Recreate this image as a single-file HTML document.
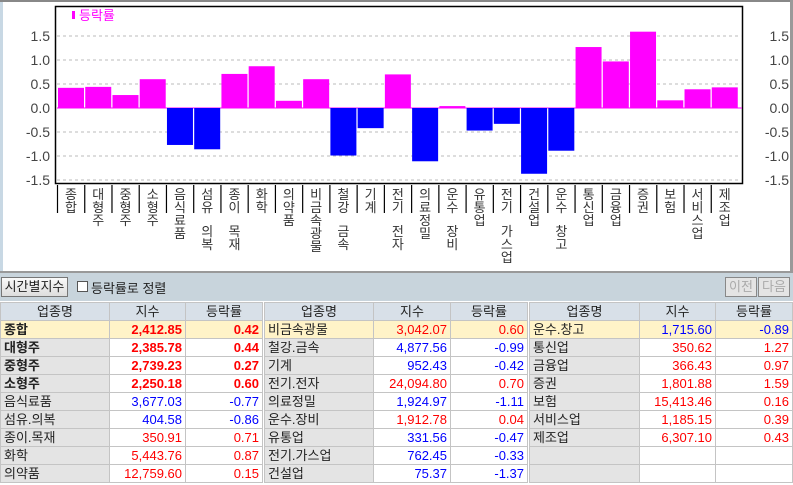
<!DOCTYPE html>
<html><head><meta charset="utf-8"><style>
*{margin:0;padding:0;box-sizing:border-box}
body{width:793px;height:485px;overflow:hidden;background:#fff;font-family:"Liberation Sans","Noto Sans CJK KR","NanumGothic",sans-serif;position:relative}
#bar{position:absolute;left:0;top:273px;width:793px;height:28px;background:#c8d4dc}
.btn{position:absolute;top:4px;height:20px;border:1px solid #777;background:linear-gradient(#fafafa,#ddd);font-size:13px;line-height:18px;text-align:center;color:#222}
.gbtn{color:#aaa;border-color:#888;background:#e4e4e4}
table{position:absolute;top:302px;border-collapse:collapse;font-size:13px;table-layout:fixed}
td,th{height:18px;border:1px solid #c4c4c4;padding:0 3px;white-space:nowrap;overflow:hidden;line-height:17px}
th{background:#d8e0e8;font-weight:normal;color:#222}
td.n{background:#e4e4e4;color:#222;text-align:left}
td{text-align:right;background:#fff}
tr.h td{background:#fff3c8}
.r{color:#f00}.b{color:#00f}.bd{font-weight:bold}
</style></head><body>
<svg style="position:absolute;left:0;top:0" width="793" height="273" font-family="Liberation Sans, Noto Sans CJK KR, sans-serif">
<rect x="0" y="0" width="793" height="273" fill="#fff"/>
<rect x="0" y="0" width="3" height="273" fill="#c8d8e4"/>
<rect x="0" y="0" width="793" height="2" fill="#888"/>
<rect x="790" y="0" width="3" height="273" fill="#999"/>
<rect x="0" y="271" width="793" height="2" fill="#999"/>
<rect x="55.5" y="6.5" width="687" height="177" fill="#fff" stroke="#000" stroke-width="1.5"/>
<g stroke="#bbb" stroke-dasharray="3,3">
<line x1="57" x2="742" y1="36" y2="36"/><line x1="57" x2="742" y1="60" y2="60"/><line x1="57" x2="742" y1="84" y2="84"/><line x1="57" x2="742" y1="132" y2="132"/><line x1="57" x2="742" y1="156" y2="156"/><line x1="57" x2="742" y1="180" y2="180"/>
</g>
<line x1="57" x2="742" y1="108" y2="108" stroke="#f0f" stroke-width="1"/>
<g font-size="14" fill="#444" text-anchor="end">
<text x="50" y="41">1.5</text><text x="50" y="65">1.0</text><text x="50" y="89">0.5</text><text x="50" y="113">0.0</text><text x="50" y="137">-0.5</text><text x="50" y="161">-1.0</text><text x="50" y="185">-1.5</text>
<text x="789" y="41">1.5</text><text x="789" y="65">1.0</text><text x="789" y="89">0.5</text><text x="789" y="113">0.0</text><text x="789" y="137">-0.5</text><text x="789" y="161">-1.0</text><text x="789" y="185">-1.5</text>
</g>
<rect x="72" y="11" width="3" height="8" fill="#f0f"/>
<text x="79" y="20" font-size="13" fill="#f0f">등락률</text>
<g id="bars"></g>
<g id="ticks" stroke="#000" stroke-width="1.2"></g>
<g id="labels" font-size="13" fill="#333" text-anchor="middle"></g>
</svg>
<div id="bar">
<div class="btn" style="left:1px;width:67px">시간별지수</div>
<div style="position:absolute;left:77px;top:8px;width:11px;height:11px;background:#fff;border:1px solid #555"></div>
<div style="position:absolute;left:91px;top:5px;font-size:13px;color:#222">등락률로 정렬</div>
<div class="btn gbtn" style="left:725px;width:32px">이전</div>
<div class="btn gbtn" style="left:758px;width:32px">다음</div>
</div>
<table style="left:0;width:262px"><colgroup><col style="width:109px"><col style="width:76px"><col style="width:77px"></colgroup>
<tr><th>업종명</th><th>지수</th><th>등락률</th></tr>
<tr class="h"><td class="n bd">종합</td><td class="r bd">2,412.85</td><td class="r bd">0.42</td></tr>
<tr><td class="n bd">대형주</td><td class="r bd">2,385.78</td><td class="r bd">0.44</td></tr>
<tr><td class="n bd">중형주</td><td class="r bd">2,739.23</td><td class="r bd">0.27</td></tr>
<tr><td class="n bd">소형주</td><td class="r bd">2,250.18</td><td class="r bd">0.60</td></tr>
<tr><td class="n">음식료품</td><td class="b">3,677.03</td><td class="b">-0.77</td></tr>
<tr><td class="n">섬유.의복</td><td class="b">404.58</td><td class="b">-0.86</td></tr>
<tr><td class="n">종이.목재</td><td class="r">350.91</td><td class="r">0.71</td></tr>
<tr><td class="n">화학</td><td class="r">5,443.76</td><td class="r">0.87</td></tr>
<tr><td class="n">의약품</td><td class="r">12,759.60</td><td class="r">0.15</td></tr>
</table>
<table style="left:264px;width:263px"><colgroup><col style="width:109px"><col style="width:77px"><col style="width:77px"></colgroup>
<tr><th>업종명</th><th>지수</th><th>등락률</th></tr>
<tr class="h"><td class="n">비금속광물</td><td class="r">3,042.07</td><td class="r">0.60</td></tr>
<tr><td class="n">철강.금속</td><td class="b">4,877.56</td><td class="b">-0.99</td></tr>
<tr><td class="n">기계</td><td class="b">952.43</td><td class="b">-0.42</td></tr>
<tr><td class="n">전기.전자</td><td class="r">24,094.80</td><td class="r">0.70</td></tr>
<tr><td class="n">의료정밀</td><td class="b">1,924.97</td><td class="b">-1.11</td></tr>
<tr><td class="n">운수.장비</td><td class="r">1,912.78</td><td class="r">0.04</td></tr>
<tr><td class="n">유통업</td><td class="b">331.56</td><td class="b">-0.47</td></tr>
<tr><td class="n">전기.가스업</td><td class="b">762.45</td><td class="b">-0.33</td></tr>
<tr><td class="n">건설업</td><td class="b">75.37</td><td class="b">-1.37</td></tr>
</table>
<table style="left:529px;width:263px"><colgroup><col style="width:110px"><col style="width:76px"><col style="width:77px"></colgroup>
<tr><th>업종명</th><th>지수</th><th>등락률</th></tr>
<tr class="h"><td class="n">운수.창고</td><td class="b">1,715.60</td><td class="b">-0.89</td></tr>
<tr><td class="n">통신업</td><td class="r">350.62</td><td class="r">1.27</td></tr>
<tr><td class="n">금융업</td><td class="r">366.43</td><td class="r">0.97</td></tr>
<tr><td class="n">증권</td><td class="r">1,801.88</td><td class="r">1.59</td></tr>
<tr><td class="n">보험</td><td class="r">15,413.46</td><td class="r">0.16</td></tr>
<tr><td class="n">서비스업</td><td class="r">1,185.15</td><td class="r">0.39</td></tr>
<tr><td class="n">제조업</td><td class="r">6,307.10</td><td class="r">0.43</td></tr>
<tr><td class="n"></td><td></td><td></td></tr>
<tr><td class="n"></td><td></td><td></td></tr>
</table>
<script>
var d=[["종합",.42],["대형주",.44],["중형주",.27],["소형주",.60],["음식료품",-.77],["섬유 의복",-.86],["종이 목재",.71],["화학",.87],["의약품",.15],["비금속광물",.60],["철강 금속",-.99],["기계",-.42],["전기 전자",.70],["의료정밀",-1.11],["운수 장비",.04],["유통업",-.47],["전기 가스업",-.33],["건설업",-1.37],["운수 창고",-.89],["통신업",1.27],["금융업",.97],["증권",1.59],["보험",.16],["서비스업",.39],["제조업",.43]];
var ns="http://www.w3.org/2000/svg",B=document.getElementById("bars"),T=document.getElementById("ticks"),L=document.getElementById("labels");
d.forEach(function(e,i){var x=57+i*27.24,v=e[1],h=Math.abs(v)*48;
var r=document.createElementNS(ns,"rect");r.setAttribute("x",x+1);r.setAttribute("width",26);r.setAttribute("y",v>0?108-h:108);r.setAttribute("height",h);r.setAttribute("fill",v>0?"#f0f":"#00f");B.appendChild(r);
var l=document.createElementNS(ns,"line");l.setAttribute("x1",x+0.5);l.setAttribute("x2",x+0.5);l.setAttribute("y1",185);l.setAttribute("y2",213);T.appendChild(l);
var s=e[0],y=199;for(var k=0;k<s.length;k++){if(s[k]!=" "){var t=document.createElementNS(ns,"text");t.setAttribute("x",x+14);t.setAttribute("y",y);t.textContent=s[k];L.appendChild(t);}y+=(s[k]==" "?11:13);}
});
</script>
</body></html>
